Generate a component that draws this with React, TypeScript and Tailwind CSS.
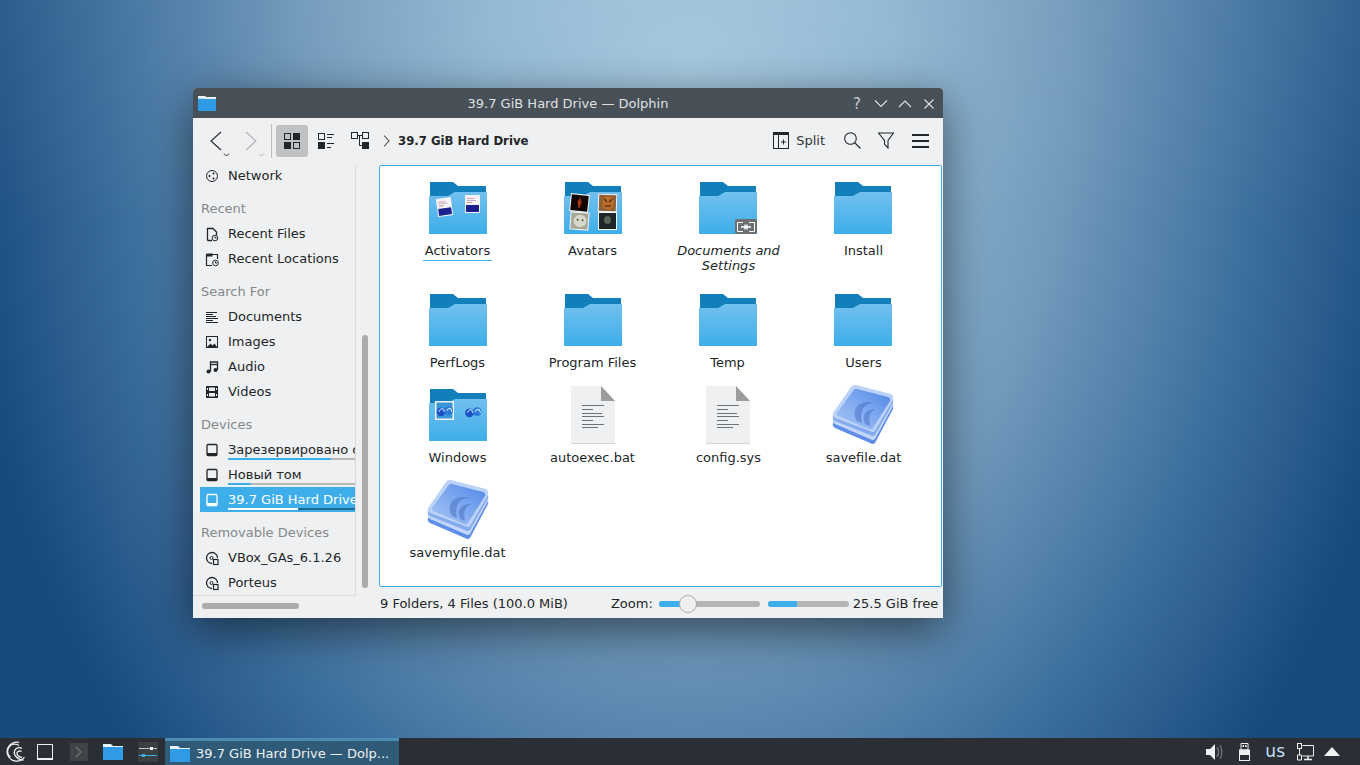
import type { ReactNode } from 'react';

const Folder = ({ children, w = 58 }: { children?: ReactNode; w?: number }) => (
  <svg width={w} height={(w * 52) / 58} viewBox="0 0 58 52">
    <defs>
      <linearGradient id="fldr" x1="0" y1="0" x2="0" y2="1">
        <stop offset="0" stopColor="#72c0ee" />
        <stop offset="1" stopColor="#3daee9" />
      </linearGradient>
    </defs>
    <path d="M1 0H24L29 4H57V14H1Z" fill="#127fbb" />
    <path d="M0 14H19L26 10H58V52H0Z" fill="url(#fldr)" />
    {children}
  </svg>
);

const Paper = ({ x, y, r = 0 }: { x: number; y: number; r?: number }) => (
  <g transform={`rotate(${r} ${x + 8} ${y + 9})`}>
    <rect x={x} y={y} width="15" height="18" fill="#f4f4f6" />
    <rect x={x + 2} y={y + 3} width="7" height="1" fill="#e3a0a0" />
    <rect x={x + 2} y={y + 5} width="9" height="1" fill="#c8b0c8" />
    <rect x={x + 2} y={y + 7} width="5" height="1" fill="#d09090" />
    <rect x={x + 1} y={y + 10} width="13" height="7" fill="#1c1f8e" />
  </g>
);

const Photo = ({ x, y, r, children }: { x: number; y: number; r: number; children: ReactNode }) => (
  <g transform={`translate(${x} ${y}) rotate(${r} 9.5 9)`}>
    <rect width="19" height="18" fill="#f4f4f4" />
    {children}
  </g>
);

const WinThumb = ({ x, y, s }: { x: number; y: number; s: number }) => (
  <g transform={`translate(${x} ${y}) scale(${s})`}>
    <circle cx="5" cy="8" r="4" fill="#1a50c8" />
    <circle cx="12" cy="7" r="4" fill="#2a78d8" />
    <path d="M3 8c2-4 4-4 5 0M10 7c2-3 4-3 5 1" stroke="#bfe0fa" strokeWidth="1" fill="none" />
  </g>
);

const Doc = () => (
  <svg width="44" height="58" viewBox="0 0 44 58">
    <path d="M0 0H30L44 15V58H0Z" fill="#eff0f1" />
    <path d="M30 0L44 15H30Z" fill="#9a9c9e" />
    <rect x="0" y="57" width="44" height="1" fill="#d4d5d6" />
    <g fill="#6f7274">
      <rect x="11" y="19" width="22" height="1" />
      <rect x="11" y="23" width="11" height="1" />
      <rect x="11" y="27" width="20" height="1" />
      <rect x="11" y="30" width="22" height="1" />
      <rect x="11" y="34" width="11" height="1" />
      <rect x="11" y="38" width="22" height="1" />
      <rect x="11" y="41" width="16" height="1" />
    </g>
  </svg>
);

const DatIcon = () => (
  <svg width="62" height="60" viewBox="0 0 62 60">
    <defs>
      <linearGradient id="dat" x1="0" y1="1" x2="1" y2="0">
        <stop offset="0" stopColor="#a9c7f6" />
        <stop offset="0.55" stopColor="#7ba6ef" />
        <stop offset="1" stopColor="#4f86e6" />
      </linearGradient>
    </defs>
    <path d="M24 8L59 18Q62 20 61 24L43 58Q41 60 38 58L3 43Q0 41 1 38L19 10Q21 7 24 8Z" fill="#5f8eea" />
    <path d="M24 5L59 15Q62 17 61 21L43 54Q41 56 38 54L3 39Q0 37 1 34L19 7Q21 4 24 5Z" fill="#c2d6f9" />
    <path d="M24 3L59 12Q62 14 61 18L43 50Q41 52 38 50L3 36Q0 34 1 31L19 4Q21 2 24 3Z" fill="#84aaf0" />
    <path d="M24 0L59 9Q62 11 61 15L43 46Q41 48 38 46L3 33Q0 31 1 28L19 2Q21-1 24 0Z" fill="#bcd2f8" />
    <path d="M25 4L56 12Q59 13 58 16L41 43Q40 45 37 44L6 31Q4 30 5 28L21 6Q23 3 25 4Z" fill="url(#dat)" />
    <path d="M25 36C18 24 28 14 43 18C33 17 27 25 30 38ZM33 39C29 30 34 24 44 24C38 26 36 32 38 41Z" fill="#4a72c4" opacity="0.55" />
  </svg>
);

const ICON = 'fill-none stroke-[#232629]';

const SideIcon = ({ name, white }: { name: string; white?: boolean }) => {
  const c = white ? '#ffffff' : '#232629';
  return (
    <svg className="shrink-0" width="16" height="16" viewBox="0 0 16 16" fill="none" stroke={c} strokeWidth="1">
      {name === 'network' && (
        <>
          <circle cx="8" cy="8" r="5.5" strokeWidth="1" />
          <circle cx="5.5" cy="8" r="1" fill={c} stroke="none" />
          <circle cx="9.5" cy="5.5" r="1" fill={c} stroke="none" />
          <circle cx="9.5" cy="10.5" r="1" fill={c} stroke="none" />
        </>
      )}
      {name === 'rfile' && (
        <>
          <path d="M3.5 14.5V2.5H9L12.5 6V9" strokeWidth="1.3" />
          <path d="M3.5 14.5H8" strokeWidth="1.3" />
          <circle cx="11" cy="12" r="2.8" />
          <path d="M11 10.5V12H12.5" />
        </>
      )}
      {name === 'rloc' && (
        <>
          <path d="M2.5 3.5H13.5V8M2.5 3.5V14.5H8" strokeWidth="1.2" />
          <rect x="2.5" y="2.5" width="6" height="3" fill={c} stroke="none" />
          <circle cx="11.5" cy="12" r="2.8" />
          <path d="M11.5 10.5V12H13" />
        </>
      )}
      {name === 'docs' && (
        <path d="M2 3.5H13M2 5.5H9M2 7.5H12M2 9.5H14M2 11.5H9M2 13.5H14" />
      )}
      {name === 'image' && (
        <>
          <rect x="2.5" y="2.5" width="11" height="11" />
          <circle cx="6" cy="6" r="1.2" fill={c} stroke="none" />
          <path d="M3 13L6.5 9.5L8.5 11.5L10.5 9.5L13 13Z" fill={c} stroke="none" />
        </>
      )}
      {name === 'audio' && (
        <>
          <path d="M6.5 12.5V3H13.5V11" strokeWidth="1.3" />
          <path d="M6.5 5.5H13.5" strokeWidth="1.3" />
          <circle cx="4.5" cy="12.5" r="2" fill={c} stroke="none" />
          <circle cx="11.5" cy="11" r="2" fill={c} stroke="none" />
        </>
      )}
      {name === 'video' && (
        <>
          <rect x="2" y="2" width="12" height="12" fill={c} stroke="none" />
          <rect x="5" y="3.5" width="6" height="3.5" fill="#eff0f1" stroke="none" />
          <rect x="5" y="9" width="6" height="3.5" fill="#eff0f1" stroke="none" />
          <rect x="3" y="4" width="1" height="2" fill="#eff0f1" stroke="none" />
          <rect x="3" y="10" width="1" height="2" fill="#eff0f1" stroke="none" />
          <rect x="12" y="4" width="1" height="2" fill="#eff0f1" stroke="none" />
          <rect x="12" y="10" width="1" height="2" fill="#eff0f1" stroke="none" />
        </>
      )}
      {name === 'drive' && (
        <>
          <rect x="3" y="2.5" width="10" height="11" rx="1" strokeWidth="1.3" />
          <rect x="3" y="11" width="10" height="2.5" fill={c} stroke="none" />
        </>
      )}
      {name === 'optical' && (
        <>
          <path d="M8 13.5A5.5 5.5 0 1 1 13.5 8" strokeWidth="1.3" />
          <circle cx="7.5" cy="8" r="1.5" />
          <rect x="9.5" y="9.5" width="4.5" height="5" fill="#eff0f1" strokeWidth="1.2" />
        </>
      )}
    </svg>
  );
};

const Row = ({ icon, label, used, selected }: { icon: string; label: string; used?: string; selected?: boolean }) => (
  <div className={`relative flex h-[25px] items-center gap-2 overflow-hidden pl-1 whitespace-nowrap ${selected ? 'bg-[#3daee9] text-white' : ''}`}>
    <SideIcon name={icon} white={selected} />
    <span>{label}</span>
    {used && (
      <div className={`absolute bottom-[2px] left-7 right-0 h-[2px] ${selected ? 'bg-[#1d6a95]' : 'bg-[#b7b9ba]'}`}>
        <div className={`h-full ${used} ${selected ? 'bg-white' : 'bg-[#3daee9]'}`} />
      </div>
    )}
  </div>
);

const Head = ({ children }: { children: string }) => (
  <div className="mt-2 flex h-[25px] items-center pl-[1px] text-[#85888b]">{children}</div>
);

const Item = ({ icon, label, className = '' }: { icon: ReactNode; label: string; className?: string }) => (
  <div className="flex flex-col items-center">
    <div className="flex h-[58px] items-center justify-center">{icon}</div>
    <div className={`mt-[6px] text-center leading-[15px] ${className}`}>{label}</div>
  </div>
);

const App = () => {
  return (
    <div className="relative flex h-screen w-screen flex-col overflow-hidden font-['DejaVu_Sans',sans-serif] text-[13px] text-[#232629]">
      <div className="flex-1 bg-[linear-gradient(to_bottom,rgba(255,255,255,0.06),rgba(255,255,255,0)_30%),radial-gradient(ellipse_730px_1000px_at_690px_100px,#a3c7de_0%,#8fb6d2_28%,#7099bb_52%,#40729f_76%,#194a7e_100%)]" />

      {/* taskbar */}
      <div className="flex h-[27px] items-center bg-[#2a2f35] text-[#eff0f1]">
        <svg className="ml-[4px]" width="22" height="22" viewBox="0 0 22 22" fill="none" stroke="#eff0f1" strokeWidth="1.3">
          <path d="M15 1.5A9.5 9.5 0 1 0 20.5 16" />
          <path d="M15 4.5A7 7 0 0 0 6.5 16" />
          <path d="M18 7.5A5 5 0 0 0 10.5 10C9 14 14 19 19.5 19" />
          <path d="M17.5 10.5A3 3 0 0 0 13 12C13 14 15 16 18 16.5" />
        </svg>
        <div className="ml-[11px] h-4 w-4 border border-b-2 border-[#eff0f1]" />
        <div className="ml-[17px] flex h-[18px] w-[18px] items-center justify-center bg-[#3f4447]">
          <svg width="10" height="12" viewBox="0 0 10 12" fill="none" stroke="#6f7477" strokeWidth="1.2"><path d="M2 1l5 5l-5 5" /></svg>
        </div>
        <svg className="ml-[15px]" width="20" height="17" viewBox="0 0 20 17">
          <path d="M0 1H8L10 3H20V6H0Z" fill="#e8f2fa" />
          <path d="M0 4H20V17H0Z" fill="#2f9ae6" />
        </svg>
        <svg className="ml-[15px]" width="20" height="20" viewBox="0 0 20 20">
          <rect width="20" height="20" fill="#3a3f42" />
          <rect x="1" y="6" width="18" height="1" fill="#bdc3c7" />
          <rect x="12" y="5" width="3" height="3" fill="#eff0f1" />
          <rect x="1" y="13" width="18" height="1" fill="#3daee9" />
          <rect x="4" y="12" width="3" height="3" fill="#3daee9" />
        </svg>
        <div className="ml-[7px] flex h-full w-[234px] items-center border-t-[3px] border-[#4a8cb2] bg-[#2f5a78] pl-[5px]">
          <svg width="20" height="17" viewBox="0 0 20 17">
            <path d="M0 1H8L10 3H20V6H0Z" fill="#e8f2fa" />
            <path d="M0 4H20V17H0Z" fill="#2f9ae6" />
          </svg>
          <span className="ml-[6px] whitespace-nowrap pt-px">39.7 GiB Hard Drive — Dolp...</span>
        </div>
        <div className="ml-auto flex items-center">
          <svg width="17" height="18" viewBox="0 0 17 18">
            <path d="M0 6H4L9 1V17L4 12H0Z" fill="#eff0f1" />
            <path d="M11 4C13 7 13 11 11 14" stroke="#6b7073" strokeWidth="1.6" fill="none" />
            <path d="M14 2C16.5 6 16.5 12 14 16" stroke="#6b7073" strokeWidth="1.4" fill="none" />
          </svg>
          <svg className="ml-[16px]" width="11" height="18" viewBox="0 0 11 18">
            <path d="M2 .5H9V7H2Z" fill="none" stroke="#eff0f1" />
            <rect x="3.5" y="2" width="1.5" height="2" fill="#eff0f1" />
            <rect x="6" y="2" width="1.5" height="2" fill="#eff0f1" />
            <rect x=".5" y="7" width="10" height="10.5" fill="none" stroke="#eff0f1" />
            <rect x="1" y="7" width="9" height="5" fill="#eff0f1" />
          </svg>
          <span className="ml-[15px] text-[17px] leading-none text-[#c4def2]">us</span>
          <svg className="ml-[12px]" width="17" height="18" viewBox="0 0 17 18" fill="none" stroke="#eff0f1">
            <path d="M5.5 2.5H16.5V13H5.5" />
            <path d="M11 13V16M7 16.5H15" strokeWidth="1.5" />
            <rect x=".5" y=".5" width="4" height="5" />
            <path d="M2.5 5.5V12M.5 12H4.5V17H.5Z" />
          </svg>
          <svg className="ml-[10px] mr-[20px]" width="16" height="9" viewBox="0 0 16 9"><path d="M8 0L16 9H0Z" fill="#eff0f1" /></svg>
        </div>
      </div>

      {/* window */}
      <div className="absolute left-[193px] top-[88px] flex h-[530px] w-[750px] flex-col overflow-hidden rounded-t-[4px] bg-[#eff0f1] shadow-[0_12px_45px_rgba(0,0,0,0.55)]">
        <div className="relative flex h-[30px] shrink-0 items-center justify-center bg-[#474f57] pt-px text-[#dfe1e3]">
          <svg className="absolute left-[5px] top-[8px]" width="18" height="15" viewBox="0 0 18 15">
            <path d="M0 0H7L9 1.5H18V4H0Z" fill="#e8f2fa" />
            <path d="M0 2.5H18V15H0Z" fill="#2f9ae6" />
            <path d="M0 2.5H7L9 1H18V3H0Z" fill="#e8f2fa" />
          </svg>
          <span>39.7 GiB Hard Drive — Dolphin</span>
          <div className="absolute right-[7px] top-[9px] flex items-center gap-[10px]">
            <span className="w-[14px] text-center text-[15px] leading-[14px] text-[#c9cbcd]">?</span>
            {['M1 3.5L7 9.5L13 3.5', 'M1 10L7 4L13 10', 'M2.5 2.5L11.5 11.5M11.5 2.5L2.5 11.5'].map((d) => (
              <svg key={d} width="14" height="14" viewBox="0 0 14 14" fill="none" stroke="#dfe1e3" strokeWidth="1.1"><path d={d} /></svg>
            ))}
          </div>
        </div>

        {/* toolbar */}
        <div className="flex h-[47px] shrink-0 items-center pb-[2px]">
          <svg className="ml-[16px] mt-[6px]" width="26" height="30" viewBox="0 0 26 30" fill="none" stroke="#232629">
            <path d="M12 3L2 12L12 21" strokeWidth="1.1" />
            <path d="M15 24.5L17.5 27L20 24.5" strokeWidth="1" />
          </svg>
          <svg className="ml-[9px] mt-[6px]" width="26" height="30" viewBox="0 0 26 30" fill="none" stroke="#b0b2b4">
            <path d="M2 3L12 12L2 21" strokeWidth="1.1" />
            <path d="M15 24.5L17.5 27L20 24.5" strokeWidth="1" />
          </svg>
          <div className="ml-[1px] h-[34px] w-px bg-[#bcbec0]" />
          <div className="ml-[4px] flex h-8 w-8 items-center justify-center rounded-[3px] bg-[#bfc1c3]">
            <svg width="16" height="16" viewBox="0 0 16 16">
              <rect x=".5" y=".5" width="6" height="6" className={ICON} />
              <rect x="9" y="0" width="7" height="7" fill="#232629" />
              <rect x="0" y="9" width="7" height="7" fill="#232629" />
              <rect x="9.5" y="9.5" width="6" height="6" className={ICON} />
            </svg>
          </div>
          <div className="ml-px flex h-8 w-[34px] items-center justify-center">
            <svg width="17" height="16" viewBox="0 0 17 16">
              <rect x=".5" y=".5" width="6" height="6" className={ICON} />
              <rect x="0" y="9" width="7" height="7" fill="#232629" />
              <path d="M9 1.5H16M9 4.5H14M9 10.5H16M9 14.5H13" className={ICON} />
            </svg>
          </div>
          <div className="flex h-8 w-[34px] items-center justify-center">
            <svg width="18" height="17" viewBox="0 0 18 17">
              <rect x=".5" y=".5" width="6" height="6" className={ICON} />
              <rect x="11.5" y=".5" width="6" height="6" className={ICON} />
              <rect x="11" y="10" width="7" height="7" fill="#232629" />
              <path d="M6 3.5H11.5M8.5 3.5V13.5H11" className={ICON} />
            </svg>
          </div>
          <svg className="ml-[6px]" width="7" height="12" viewBox="0 0 7 12" fill="none" stroke="#4d4d4d" strokeWidth="1.1"><path d="M1 .5L6 6L1 11.5" /></svg>
          <span className="ml-[8px] font-['DejaVu_Sans_Condensed','DejaVu_Sans',sans-serif] text-[13px] font-bold">39.7 GiB Hard Drive</span>
          <div className="ml-auto flex items-center">
            <svg width="16" height="17" viewBox="0 0 16 17">
              <rect x=".5" y=".5" width="15" height="16" className={ICON} />
              <rect x="0" y="0" width="16" height="3" fill="#232629" />
              <path d="M5.5 3V17M8 10H13M10.5 7.5V12.5" className={ICON} />
            </svg>
            <span className="ml-[7px] text-[#31363b]">Split</span>
            <svg className="ml-[19px]" width="17" height="17" viewBox="0 0 17 17" fill="none" stroke="#232629" strokeWidth="1.1">
              <circle cx="6.5" cy="6.5" r="5.8" />
              <path d="M10.5 10.5L16.5 16.5" />
            </svg>
            <svg className="ml-[17px]" width="16" height="17" viewBox="0 0 16 17" fill="none" stroke="#232629" strokeWidth="1.1">
              <path d="M.5 1H15.5L10 8.5V16L6.5 12V8.5Z" />
            </svg>
            <div className="ml-[18px] mr-[14px] flex w-[17px] flex-col gap-[4px]">
              <div className="h-[2px] bg-[#232629]" />
              <div className="h-[2px] bg-[#232629]" />
              <div className="h-[2px] bg-[#232629]" />
            </div>
          </div>
        </div>

        <div className="flex flex-1">
          {/* places panel */}
          <div className="w-[163px] shrink-0">
            <div className="h-[431px] overflow-hidden rounded-br-[2px] border-r border-b border-[#d8dadb] pl-[7px]">
              <div className="-mt-[2px]">
                <Row icon="network" label="Network" />
                <Head>Recent</Head>
                <Row icon="rfile" label="Recent Files" />
                <Row icon="rloc" label="Recent Locations" />
                <Head>Search For</Head>
                <Row icon="docs" label="Documents" />
                <Row icon="image" label="Images" />
                <Row icon="audio" label="Audio" />
                <Row icon="video" label="Videos" />
                <Head>Devices</Head>
                <Row icon="drive" label="Зарезервировано системой" used="w-[81%]" />
                <Row icon="drive" label="Новый том" used="w-[18%]" />
                <Row icon="drive" label="39.7 GiB Hard Drive" used="w-[55%]" selected />
                <Head>Removable Devices</Head>
                <Row icon="optical" label="VBox_GAs_6.1.26" />
                <Row icon="optical" label="Porteus" />
              </div>
            </div>
            <div className="ml-[9px] mt-[7px] h-[6px] w-[97px] rounded-full bg-[#a9abac]" />
          </div>

          <div className="w-[23px] shrink-0">
            <div className="ml-[6px] mt-[170px] h-[253px] w-[6px] rounded-full bg-[#a9abac]" />
          </div>

          <div className="flex flex-1 flex-col">
            {/* file view */}
            <div className="mr-px h-[422px] rounded-[2px] border border-[#3daee9] bg-white pl-[10px] pt-[13px]">
              <div className="grid w-[540px] grid-cols-[135px_135px_135px_135px] grid-rows-[112px_95px_95px_95px]">
                <Item
                  className="border-b border-[#3daee9] px-[2px] pb-[2px]"
                  label="Activators"
                  icon={
                    <Folder>
                      <Paper x={8} y={16} r={-8} />
                      <Paper x={36} y={13} />
                    </Folder>
                  }
                />
                <Item
                  label="Avatars"
                  icon={
                    <Folder>
                      <Photo x={6} y={12} r={6}>
                        <rect x="1" y="1" width="17" height="16" fill="#120604" />
                        <path d="M9.5 3L11.5 8L10 14H9L7.5 8Z" fill="#a83210" />
                      </Photo>
                      <Photo x={34} y={12} r={2}>
                        <rect x="1" y="1" width="17" height="16" fill="#8c6034" />
                        <ellipse cx="10" cy="9" rx="6" ry="7" fill="#bb6c2a" />
                        <path d="M6 5L9 8M14 5L11 8M7 12H13" stroke="#2e1c10" strokeWidth="1" />
                      </Photo>
                      <Photo x={6} y={30} r={4}>
                        <rect x="1" y="1" width="17" height="16" fill="#a8a898" />
                        <ellipse cx="10" cy="9" rx="6.5" ry="6" fill="#d8d8cc" />
                        <circle cx="7.5" cy="8" r="1" fill="#4a5a30" />
                        <circle cx="12.5" cy="8" r="1" fill="#4a5a30" />
                      </Photo>
                      <Photo x={34} y={30} r={0}>
                        <rect x="1" y="1" width="17" height="16" fill="#1e2628" />
                        <ellipse cx="9.5" cy="8" rx="3.5" ry="4" fill="#5a6258" />
                      </Photo>
                    </Folder>
                  }
                />
                <div className="flex flex-col items-center">
                  <div className="relative flex h-[58px] items-center justify-center">
                    <Folder />
                    <div className="absolute bottom-[3px] right-0 flex h-[15px] w-[22px] items-center justify-center rounded-[2px] bg-[#6b7073]">
                      <svg width="18" height="10" viewBox="0 0 18 10" fill="none" stroke="#fff">
                        <path d="M6 .5H.5V9.5H6M12 .5H17.5V9.5H12" />
                        <path d="M4 5H14M8 2.5V7.5M10 2.5V7.5" strokeWidth="1.4" />
                      </svg>
                    </div>
                  </div>
                  <div className="mt-[6px] pl-[2px] text-center italic leading-[15px]">
                    Documents and
                    <br />
                    Settings
                  </div>
                </div>
                <Item label="Install" className="pl-[2px]" icon={<Folder />} />
                <Item label="PerfLogs" icon={<Folder />} />
                <Item label="Program Files" icon={<Folder />} />
                <Item label="Temp" icon={<Folder />} />
                <Item label="Users" className="pl-[2px]" icon={<Folder />} />
                <Item
                  label="Windows"
                  icon={
                    <Folder>
                      <rect x="6" y="12" width="19" height="19" fill="#f0f4f8" />
                      <rect x="7.5" y="13.5" width="16" height="16" fill="#3a98d8" />
                      <WinThumb x={6.5} y={14} s={1.1} />
                      <WinThumb x={35} y={15} s={1.1} />
                    </Folder>
                  }
                />
                <Item label="autoexec.bat" icon={<Doc />} />
                <Item label="config.sys" className="pl-[2px]" icon={<Doc />} />
                <Item label="savefile.dat" className="pl-[2px]" icon={<DatIcon />} />
                <Item label="savemyfile.dat" icon={<DatIcon />} />
              </div>
            </div>

            {/* status bar */}
            <div className="flex flex-1 items-center pr-[4px] pt-[2px] whitespace-nowrap">
              <span className="ml-[1px]">9 Folders, 4 Files (100.0 MiB)</span>
              <span className="ml-[43px]">Zoom:</span>
              <div className="relative ml-[6px] h-[6px] w-[101px] rounded-full bg-[#b2b4b5]">
                <div className="h-full w-[29px] rounded-l-full bg-[#3daee9]" />
                <div className="absolute left-[20px] top-[-6px] h-[18px] w-[18px] rounded-full border border-[#a9abac] bg-[#eff0f1]" />
              </div>
              <div className="ml-[8px] h-[6px] w-[81px] rounded-full bg-[#b2b4b5]">
                <div className="h-full w-[29px] rounded-l-full bg-[#3daee9]" />
              </div>
              <span className="ml-[4px]">25.5 GiB free</span>
            </div>
          </div>
        </div>
      </div>
    </div>
  );
};

export default App;
